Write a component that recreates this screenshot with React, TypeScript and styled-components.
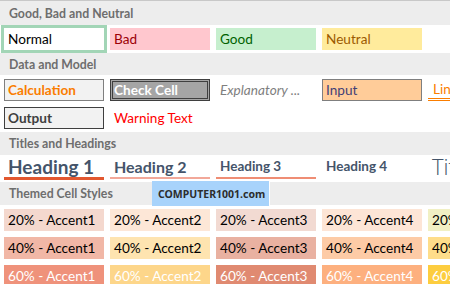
import React from "react";
import styled, { createGlobalStyle, css } from "styled-components";

const Global = createGlobalStyle`
  html, body { margin: 0; padding: 0; background: #ffffff; }
  body { width: 450px; height: 284px; overflow: hidden; font-family: Lato, "Liberation Sans", sans-serif; }
`;

const Gallery = styled.div`
  width: 450px;
  height: 284px;
  overflow: hidden;
  position: relative;
  display: flex;
  flex-direction: column;
  background: #ffffff;
  border-top: 1px solid #c8c8c8;
  box-sizing: border-box;
`;

const SectionHeader = styled.div<{ $h: number }>`
  height: ${(p) => p.$h}px;
  flex-shrink: 0;
  background: #ededed;
  color: #6e6e6e;
  font-weight: 700;
  font-size: 12.3px;
  display: flex;
  align-items: center;
  padding-left: 9px;
`;

const Rows = styled.div<{ $pt: number; $pb: number }>`
  display: flex;
  flex-direction: column;
  gap: 6px;
  padding: ${(p) => p.$pt}px 0 ${(p) => p.$pb}px 4px;
  flex-shrink: 0;
`;

const Row = styled.div<{ $align?: string }>`
  display: flex;
  gap: 6px;
  align-items: ${(p) => p.$align || "center"};
  white-space: nowrap;
`;

type Variant =
  | "normal"
  | "bad"
  | "good"
  | "neutral"
  | "calc"
  | "check"
  | "explan"
  | "input"
  | "linked"
  | "output"
  | "warning";

const variants: Record<Variant, ReturnType<typeof css>> = {
  normal: css`
    margin: -3px;
    height: 28px;
    width: 106px;
    border: 3px solid #a2d5b6;
    color: #000;
    padding-left: 4px;
  `,
  bad: css`background: #ffc7ce; color: #9c0006;`,
  good: css`background: #c6efce; color: #006100;`,
  neutral: css`background: #ffeb9c; color: #9c5a00;`,
  calc: css`background: #f2f2f2; border: 1px solid #7f7f7f; color: #fa7d00; font-weight: 700; padding-left: 3px;`,
  check: css`background: #a5a5a5; border: 3px double #3f3f3f; color: #ffffff; font-weight: 700; padding-left: 1px;`,
  explan: css`color: #7f7f7f; font-style: italic;`,
  input: css`background: #ffcc99; border: 1px solid #7f7f7f; color: #3f3f76; padding-left: 3px;`,
  linked: css`color: #fa7d00; border-bottom: 3px double #fa7d00; padding-left: 5px;`,
  output: css`background: #f2f2f2; border: 1px solid #3f3f3f; color: #3f3f3f; font-weight: 700; padding-left: 3px;`,
  warning: css`color: #ff0000; padding-left: 4px;`,
};

const Cell = styled.div<{ $v: Variant }>`
  box-sizing: border-box;
  flex-shrink: 0;
  width: 100px;
  height: 22px;
  display: flex;
  align-items: center;
  padding-left: 4px;
  font-size: 13.6px;
  overflow: hidden;
  ${(p) => variants[p.$v]}
`;

const Heading = styled.div<{ $level: 1 | 2 | 3 | 4 }>`
  box-sizing: border-box;
  flex-shrink: 0;
  width: 100px;
  display: flex;
  align-items: center;
  padding-left: 4px;
  color: #44546a;
  font-weight: 700;
  overflow: hidden;
  ${(p) =>
    p.$level === 1
      ? css`height: 25px; font-size: 19px; border-bottom: 3px solid #e2572f;`
      : p.$level === 2
      ? css`height: 24px; font-size: 16px; border-bottom: 2px solid #f2a899;`
      : p.$level === 3
      ? css`height: 24px; font-size: 13.5px; border-bottom: 2px solid #ef8d74;`
      : css`height: 22px; font-size: 13.5px;`}
`;

const Title = styled.div`
  flex-shrink: 0;
  height: 22px;
  display: flex;
  align-items: center;
  padding-left: 4px;
  color: #44546a;
  font-weight: 300;
  font-size: 22px;
  font-family: "Open Sans", Lato, sans-serif;
`;

const Swatch = styled.div<{ $bg: string; $light?: boolean }>`
  box-sizing: border-box;
  flex-shrink: 0;
  width: 100px;
  height: 22px;
  display: flex;
  align-items: center;
  padding-left: 4px;
  font-size: 13.6px;
  background: ${(p) => p.$bg};
  color: ${(p) => (p.$light ? "#ffffff" : "#000000")};
  overflow: hidden;
`;

const Watermark = styled.div`
  position: absolute;
  left: 152px;
  top: 180px;
  width: 118px;
  height: 25px;
  background: #a8d3fb;
  color: #2d2d2d;
  font-weight: 700;
  font-size: 10.5px;
  font-family: "Noto Sans", "Open Sans", sans-serif;
  display: flex;
  align-items: center;
  padding-left: 6px;
  box-sizing: border-box;
  border-right: 1px solid #ffffff;
`;

const accents: { pct: string; colors: string[]; light?: boolean }[] = [
  { pct: "20%", colors: ["#f4d8ce", "#fde7d7", "#f2dad2", "#fde5d6", "#f1f0c4"] },
  { pct: "40%", colors: ["#f1b7a6", "#fee4b0", "#e9b1a1", "#fdcba6", "#fedd8a"] },
  { pct: "60%", colors: ["#ef927b", "#fdd68a", "#e08a71", "#fdb07f", "#fdcd3f"], light: true },
];

export default function App() {
  return (
    <>
      <Global />
      <Gallery>
        <SectionHeader $h={24}>Good, Bad and Neutral</SectionHeader>
        <Rows $pt={3} $pb={3}>
          <Row>
            <Cell $v="normal">Normal</Cell>
            <Cell $v="bad">Bad</Cell>
            <Cell $v="good">Good</Cell>
            <Cell $v="neutral">Neutral</Cell>
          </Row>
        </Rows>
        <SectionHeader $h={22}>Data and Model</SectionHeader>
        <Rows $pt={4} $pb={3}>
          <Row>
            <Cell $v="calc">Calculation</Cell>
            <Cell $v="check">Check Cell</Cell>
            <Cell $v="explan">Explanatory ...</Cell>
            <Cell $v="input">Input</Cell>
            <Cell $v="linked">Linked Cell</Cell>
          </Row>
          <Row>
            <Cell $v="output">Output</Cell>
            <Cell $v="warning">Warning Text</Cell>
          </Row>
        </Rows>
        <SectionHeader $h={23}>Titles and Headings</SectionHeader>
        <Rows $pt={0} $pb={2}>
          <Row $align="flex-start">
            <Heading $level={1}>Heading 1</Heading>
            <Heading $level={2}>Heading 2</Heading>
            <Heading $level={3}>Heading 3</Heading>
            <Heading $level={4}>Heading 4</Heading>
            <Title>Title</Title>
          </Row>
        </Rows>
        <SectionHeader $h={23}>Themed Cell Styles</SectionHeader>
        <Rows $pt={4} $pb={0}>
          {accents.map((a) => (
            <Row key={a.pct}>
              {a.colors.map((c, i) => (
                <Swatch key={c} $bg={c} $light={a.light}>
                  {a.pct} - Accent{i + 1}
                </Swatch>
              ))}
            </Row>
          ))}
        </Rows>
        <Watermark>COMPUTER1001.com</Watermark>
      </Gallery>
    </>
  );
}
